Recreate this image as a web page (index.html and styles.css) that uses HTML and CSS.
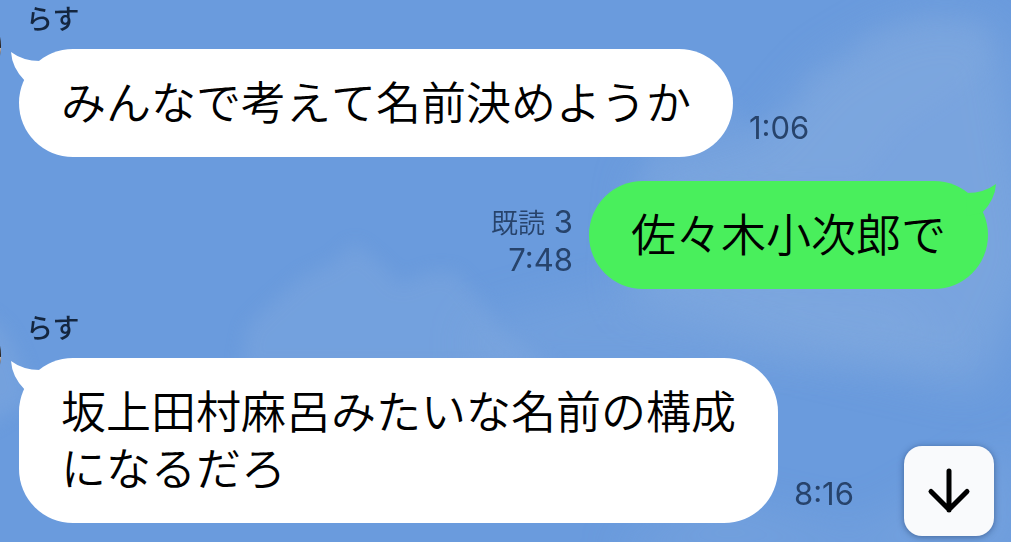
FILE: index.html
```html
<!DOCTYPE html>
<html lang="ja">
<head>
<meta charset="utf-8">
<meta name="viewport" content="width=device-width, initial-scale=1">
<title>トーク</title>
<link rel="stylesheet" href="styles.css">
</head>
<body>
<svg class="sky" viewBox="0 0 1011 542" preserveAspectRatio="none" aria-hidden="true">
  <defs>
    <filter id="soft" x="-20%" y="-20%" width="140%" height="140%"><feGaussianBlur stdDeviation="9"/></filter>
    <filter id="wide" x="-30%" y="-30%" width="160%" height="160%"><feGaussianBlur stdDeviation="22"/></filter>
  </defs>
  <g fill="#84abdf">
    <path filter="url(#wide)" opacity=".6" d="M870 40 Q940 0 1000 30 L1040 260 L980 390 L800 350 L630 300 L640 170 L760 140 L820 70Z"/>
    <path filter="url(#soft)" opacity=".22" d="M865 35 L930 18 L985 25 L990 60 L960 90 L900 130 L860 180 L640 182 L650 150 L735 100 L745 130 L800 105 L808 75 L845 65Z"/>
    <path filter="url(#soft)" opacity=".38" d="M240 370 L248 325 L275 300 L305 275 L330 265 L355 243 L385 268 L400 285 L430 272 L455 272 L480 300 L500 330 L560 370Z"/>
    <path filter="url(#wide)" opacity=".3" d="M470 320 L620 280 L900 290 L960 350 L800 370 L470 370Z"/>
    <path filter="url(#soft)" opacity=".4" d="M-20 310 L5 330 L20 360 L30 400 L-20 430Z"/>
    <path filter="url(#wide)" opacity=".35" d="M620 540 L720 500 L860 530 L1020 440 L1020 560 L620 560Z"/>
  </g>
</svg>
<main class="chat">
  <article class="message received">
    <svg class="avatar" viewBox="0 0 88 88" aria-hidden="true"><circle cx="44" cy="44" r="44" fill="#2b2522"/><path d="M60 46h28a44 44 0 0 1-28 38z" fill="#c9b8ae"/></svg>
    <h2 class="name">らす</h2>
    <div class="row">
      <p class="bubble">みんなで考えて名前決めようか<svg class="tail" viewBox="0 0 30 32" aria-hidden="true"><path d="M0 0Q12 9 29 9L30 32L14 29Q1 16 0 0Z"/></svg></p>
      <div class="meta"><time>1:06</time></div>
    </div>
  </article>
  <article class="message sent">
    <div class="row">
      <div class="meta"><span><span class="read">既読</span> 3</span><time>7:48</time></div>
      <p class="bubble">佐々木小次郎で<svg class="tail" viewBox="0 0 30 32" aria-hidden="true"><path d="M0 0Q12 9 29 9L30 32L14 29Q1 16 0 0Z"/></svg></p>
    </div>
  </article>
  <article class="message received">
    <svg class="avatar" viewBox="0 0 88 88" aria-hidden="true"><circle cx="44" cy="44" r="44" fill="#2b2522"/><path d="M60 46h28a44 44 0 0 1-28 38z" fill="#c9b8ae"/></svg>
    <h2 class="name">らす</h2>
    <div class="row">
      <p class="bubble">坂上田村麻呂みたいな名前の構成になるだろ<svg class="tail" viewBox="0 0 30 32" aria-hidden="true"><path d="M0 0Q12 9 29 9L30 32L14 29Q1 16 0 0Z"/></svg></p>
      <div class="meta"><time>8:16</time></div>
    </div>
  </article>
</main>
<button class="to-latest" type="button" aria-label="最新のメッセージへ">
  <svg viewBox="0 0 44 46" aria-hidden="true"><path d="M22 3V42M4 23.500L22 41.500L40 23.500"/></svg>
</button>
</body>
</html>
```
FILE: styles.css
```css
* { box-sizing: border-box; }

body {
  margin: 0;
  min-height: 100vh;
  overflow: hidden;
  background: #6a9bdd;
  color: #000;
  font-family: Inter, "Noto Sans CJK JP", sans-serif;
}

.sky {
  position: fixed;
  inset: 0;
  z-index: -1;
  width: 100%;
  height: 100%;
}

.chat {
  display: flex;
  flex-direction: column;
  gap: 24px;
  padding: 4px 23px 16px 19px;
}

.message { position: relative; }

.avatar {
  position: absolute;
  top: -2px;
  left: -106px;
  width: 88px;
  height: 88px;
}

.name {
  margin: 0 0 17px 7px;
  color: #14263f;
  font: 500 27px/28px "Noto Sans CJK JP", sans-serif;
}

.row {
  display: flex;
  align-items: flex-end;
  gap: 16px;
}

.sent .row { justify-content: flex-end; }

.bubble {
  position: relative;
  max-width: 759px;
  margin: 0;
  padding: 23px 42px 28px;
  border-radius: 54px;
  background: #fff;
  font: 350 45px/57px "Noto Sans CJK JP", sans-serif;
  font-kerning: none;
}

.sent .bubble { background: #49ef5c; }

.tail {
  position: absolute;
  top: 3px;
  left: -8px;
  width: 30px;
  height: 32px;
  fill: #fff;
}

.sent .tail {
  right: -8px;
  left: auto;
  fill: #49ef5c;
  transform: scaleX(-1);
}

.meta {
  display: flex;
  flex-direction: column;
  flex: none;
  padding-bottom: 11px;
  color: #27436b;
  font-size: 31px;
  line-height: 36px;
}

.sent .meta { align-items: flex-end; }

.read {
  font-size: 27px;
  font-weight: 350;
}

.to-latest {
  position: fixed;
  right: 17px;
  bottom: 6px;
  display: grid;
  place-items: center;
  width: 90px;
  height: 90px;
  padding: 0;
  border: 0;
  border-radius: 18px;
  background: #f9fafc;
  box-shadow: 0 1px 6px rgb(20 45 90 / 50%);
}

.to-latest svg {
  width: 44px;
  height: 46px;
  fill: none;
  stroke: #000;
  stroke-width: 5;
  stroke-linecap: round;
  stroke-linejoin: round;
}
```
